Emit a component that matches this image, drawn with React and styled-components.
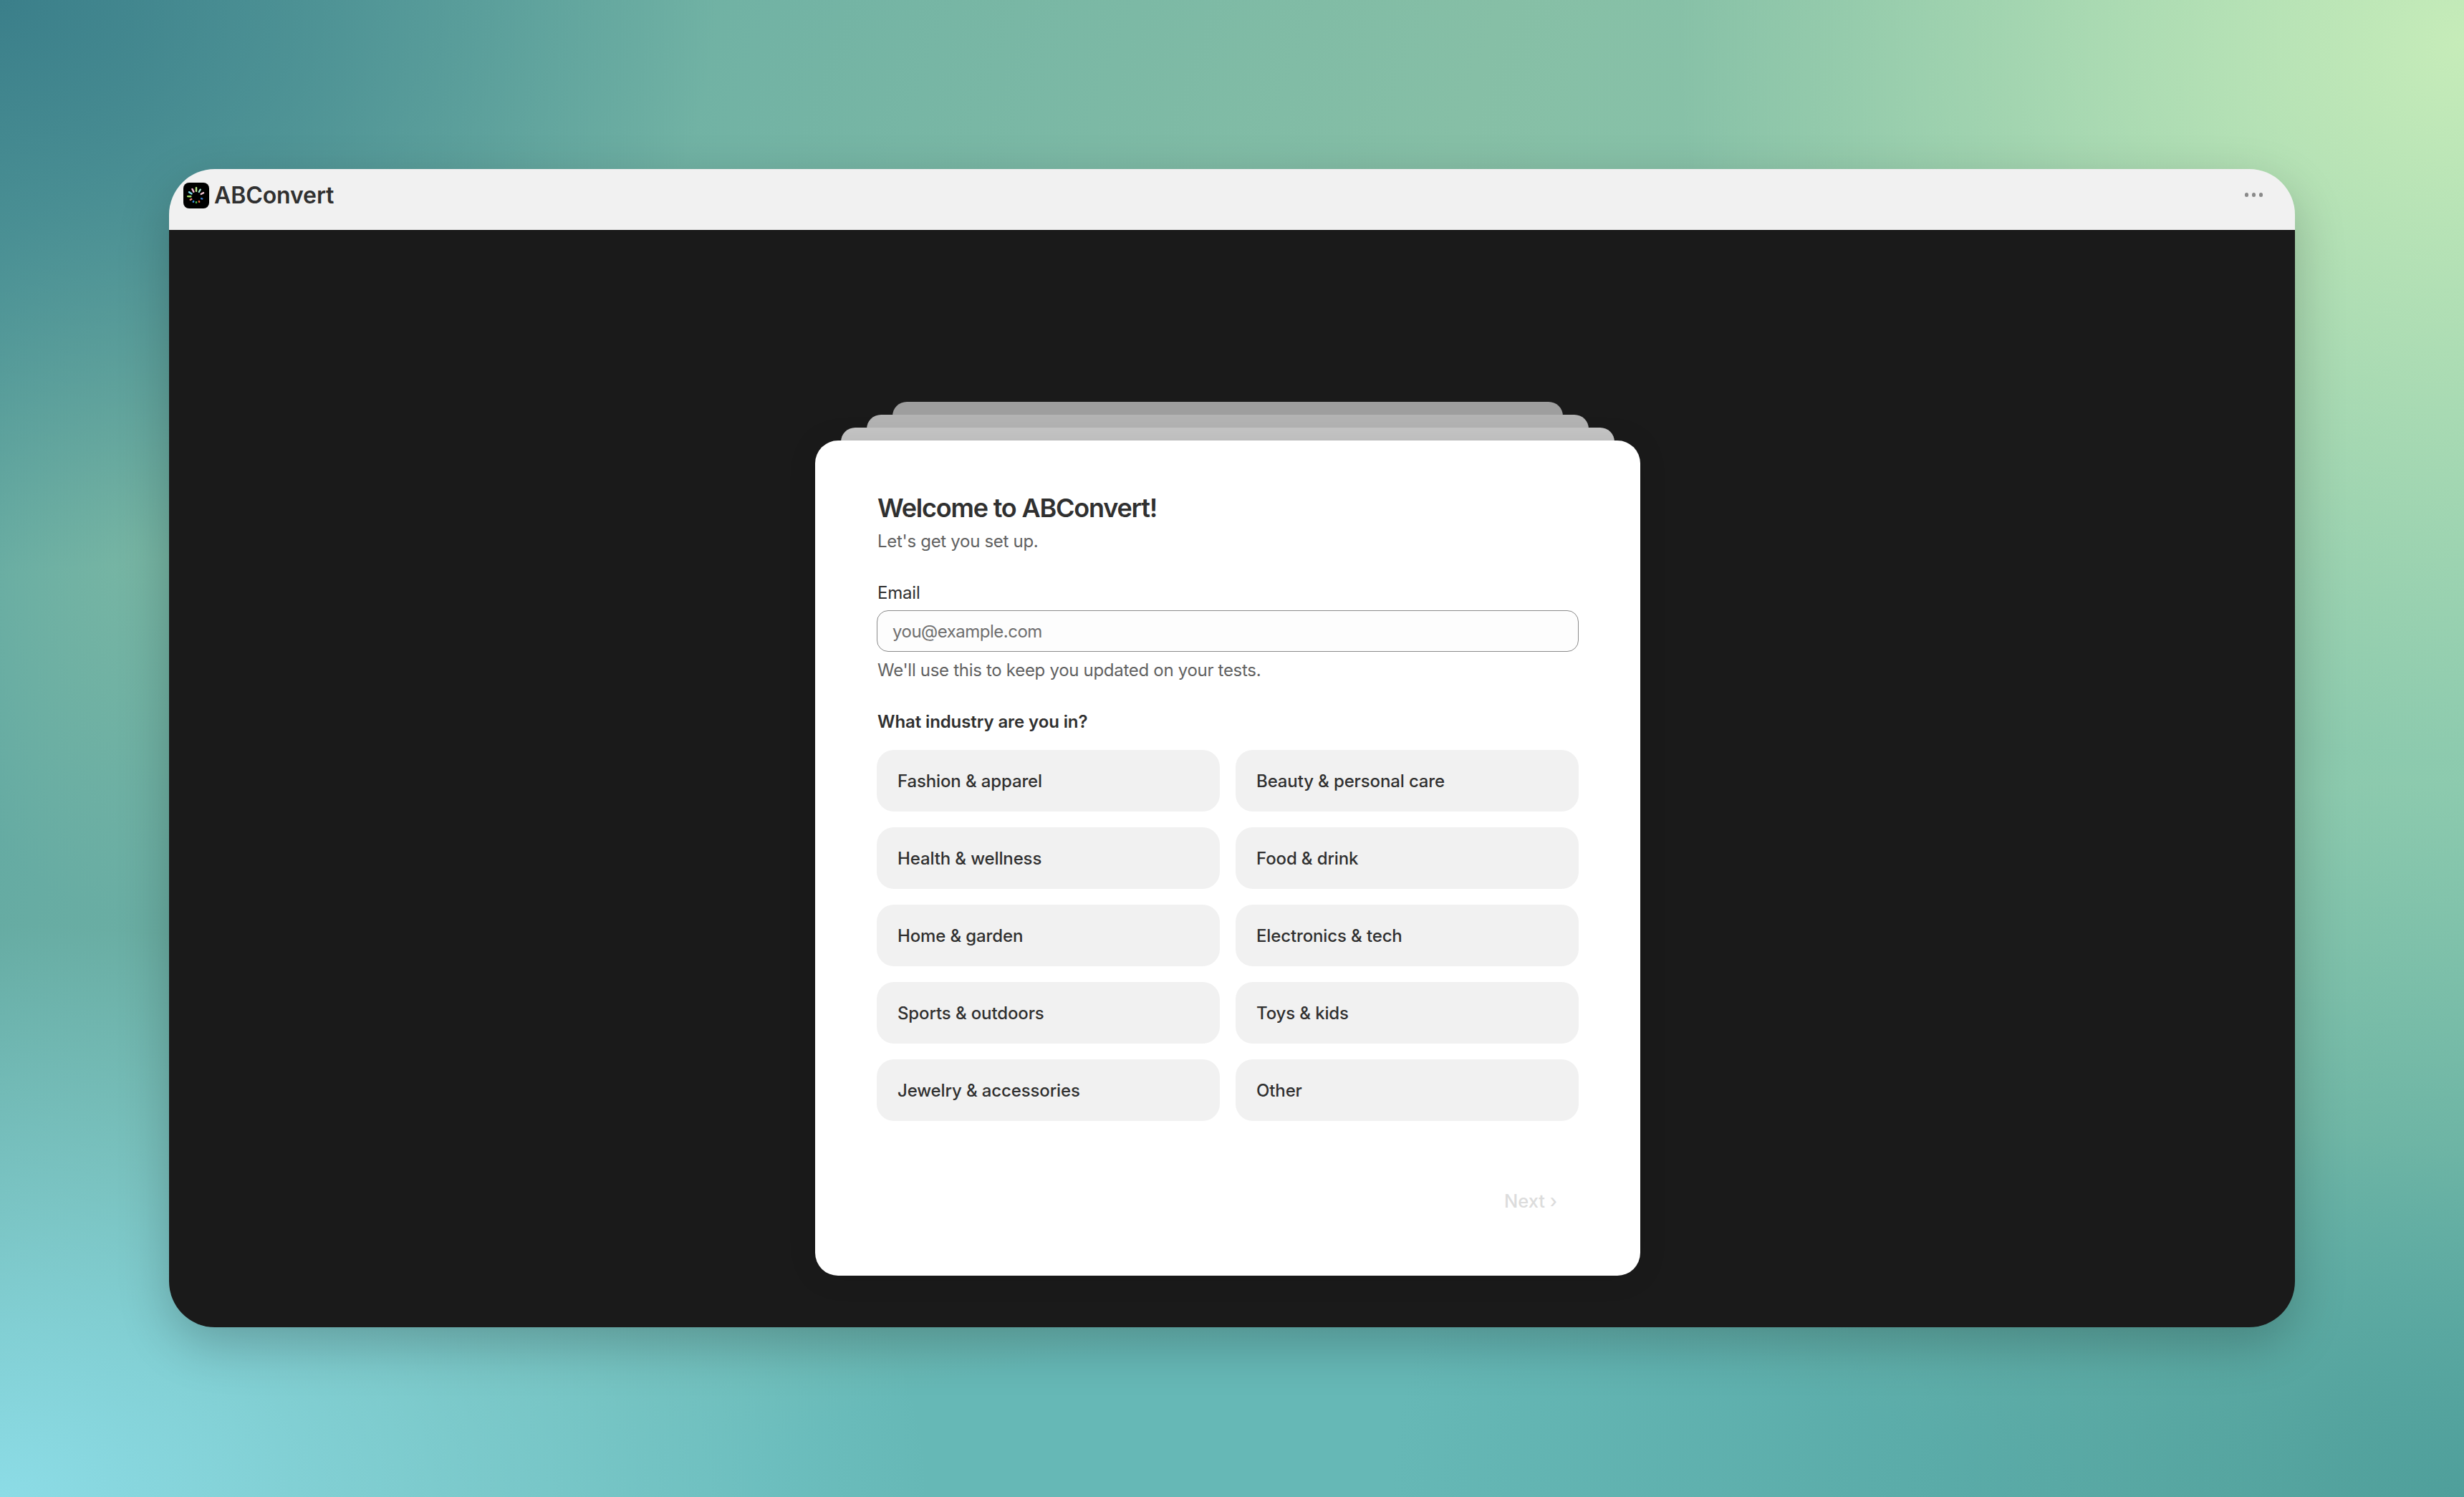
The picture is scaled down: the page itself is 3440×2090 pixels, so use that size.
import React from 'react';
import styled, { createGlobalStyle } from 'styled-components';

const Global = createGlobalStyle`
  html, body { margin: 0; padding: 0; }
  body { font-family: Inter, "Liberation Sans", sans-serif; -webkit-font-smoothing: antialiased; }
`;

const Backdrop = styled.div`
  width: 3440px;
  height: 2090px;
  box-sizing: border-box;
  padding: 236px 236px 237px;
  overflow: hidden;
  background:
    radial-gradient(1100px 1000px at 3440px 60px, #c6ecb9 0%, rgba(198,236,185,0) 100%),
    radial-gradient(1300px 800px at 0px 2090px, #8cdce6 0%, rgba(140,220,230,0) 100%),
    radial-gradient(1000px 800px at 0px 0px, #3b7f8a 0%, rgba(59,127,138,0) 100%),
    radial-gradient(1500px 1000px at 3440px 2090px, #4f9f9b 0%, rgba(79,159,155,0) 100%),
    radial-gradient(2400px 620px at 1900px 2090px, #66b8b6 0%, #66b8b6 35%, rgba(102,184,182,0) 100%),
    radial-gradient(320px 520px at 190px 760px, rgba(150,200,165,.35) 0%, rgba(150,200,165,0) 100%),
    linear-gradient(110deg, #5da6a2 0%, #86bfa6 50%, #8ecdb0 100%);
`;

const Win = styled.div`
  height: 1617px;
  display: flex;
  flex-direction: column;
  border-radius: 64px;
  overflow: hidden;
  box-shadow: 0 24px 70px rgba(0, 0, 0, 0.22);
`;

const TitleBar = styled.header`
  height: 85px;
  flex: none;
  background: #f1f1f1;
  display: flex;
  align-items: flex-start;
  justify-content: space-between;
  padding: 19px 45px 0 20px;
  box-sizing: border-box;
`;

const Brand = styled.div`
  display: flex;
  align-items: center;
  gap: 7px;
  font-size: 32px;
  line-height: 36px;
  font-weight: 600;
  letter-spacing: -0.1px;
  color: #303030;
`;

const Dots = styled.div`
  display: flex;
  gap: 4.5px;
  margin-top: 14px;
`;

const Dot = styled.span`
  width: 5.5px;
  height: 5.5px;
  border-radius: 50%;
  background: #8a8a8a;
`;

const Stage = styled.main`
  flex: 1;
  background: #1a1a1a;
  display: flex;
  justify-content: center;
  padding: 294px 12px 72px 0;
`;

const Stack = styled.div`
  position: relative;
  width: 1152px;
  height: 1166px;
`;

const Layer = styled.div`
  position: absolute;
  top: ${p => p.$top}px;
  left: ${p => p.$inset}px;
  right: ${p => p.$inset}px;
  height: 60px;
  border-radius: 20px 20px 0 0;
  background: ${p => p.$color};
`;

const Card = styled.section`
  position: relative;
  height: 100%;
  box-sizing: border-box;
  background: #fff;
  border-radius: 32px;
  padding: 72px 86px 0;
  display: flex;
  flex-direction: column;
  box-shadow: 0 2px 40px rgba(0,0,0,.1);
`;

const Title = styled.h1`
  margin: 0 0 0 1px;
  font-size: 36px;
  line-height: 44px;
  font-weight: 600;
  letter-spacing: -1.2px;
  color: #303030;
`;

const Sub = styled.p`
  margin: 9px 0 0 1px;
  font-size: 24px;
  line-height: 32px;
  letter-spacing: -0.3px;
  color: #616161;
`;

const Label = styled.label`
  margin: 40px 0 0 1px;
  font-size: 24px;
  line-height: 32px;
  letter-spacing: -0.2px;
  color: #303030;
`;

const Input = styled.input`
  margin-top: 8px;
  height: 58px;
  box-sizing: border-box;
  width: 100%;
  padding: 0 21px;
  border: 1px solid #8a8a8a;
  border-radius: 16px;
  background: #fdfdfd;
  font: 400 24px Inter, sans-serif;
  letter-spacing: -0.5px;
  color: #303030;
  outline: none;
  &::placeholder { color: #6f6f6f; opacity: 1; }
`;

const Hint = styled.p`
  margin: 10px 0 0 1px;
  font-size: 24px;
  line-height: 32px;
  letter-spacing: -0.3px;
  color: #616161;
`;

const Question = styled.h2`
  margin: 40px 0 0 1px;
  font-size: 24px;
  line-height: 32px;
  font-weight: 600;
  letter-spacing: -0.1px;
  color: #303030;
`;

const Grid = styled.div`
  margin-top: 23px;
  display: grid;
  grid-template-columns: 1fr 1fr;
  gap: 22px;
`;

const Option = styled.button`
  height: 86px;
  border: 0;
  border-radius: 24px;
  background: #f1f1f1;
  padding: 0 29px;
  text-align: left;
  font: 500 24px Inter, sans-serif;
  letter-spacing: -0.13px;
  color: #303030;
`;

const Footer = styled.div`
  display: flex;
  justify-content: flex-end;
  margin-top: 96px;
  padding-right: 30px;
`;

const Next = styled.button`
  border: 0;
  background: none;
  padding: 0;
  font: 500 25.5px/32px Inter, sans-serif;
  color: #dcdcdc;
`;

const TICKS = [
  [0, 7, '#b8e986'], [30, 6, '#9fe0d0'], [62, 6, '#f5c6d6'], [110, 3.5, '#3d7ed6'], [150, 3, '#e0683f'],
  [180, 3, '#43b649'], [210, 3, '#3f8fe0'], [242, 4, '#f08a80'], [272, 6.5, '#a8e664'], [302, 6.5, '#7fdcec'], [332, 6.5, '#f5b8d0'],
];

const Logo = () => (
  <svg width="36" height="36" viewBox="0 0 36 36" aria-hidden="true">
    <rect width="36" height="36" rx="8" fill="#000" />
    {TICKS.map(([a, len, c]) => (
      <rect key={a} x="16.8" y={19.5 - 6.5 - len} width="2.4" height={len} rx="1" fill={c} transform={`rotate(${a} 18 19.5)`} />
    ))}
  </svg>
);

const OPTIONS = [
  'Fashion & apparel', 'Beauty & personal care', 'Health & wellness', 'Food & drink', 'Home & garden',
  'Electronics & tech', 'Sports & outdoors', 'Toys & kids', 'Jewelry & accessories', 'Other',
];

export default function App() {
  return (
    <Backdrop>
      <Global />
      <Win>
        <TitleBar>
          <Brand><Logo />ABConvert</Brand>
          <Dots><Dot /><Dot /><Dot /></Dots>
        </TitleBar>
        <Stage>
          <Stack>
            <Layer $top={-54} $inset={108} $color="#9e9e9e" />
            <Layer $top={-36} $inset={72} $color="#b3b3b3" />
            <Layer $top={-18} $inset={36} $color="#c6c6c6" />
            <Card>
              <Title>Welcome to ABConvert!</Title>
              <Sub>Let's get you set up.</Sub>
              <Label>Email</Label>
              <Input placeholder="you@example.com" />
              <Hint>We'll use this to keep you updated on your tests.</Hint>
              <Question>What industry are you in?</Question>
              <Grid>{OPTIONS.map(o => <Option key={o}>{o}</Option>)}</Grid>
              <Footer><Next>Next ›</Next></Footer>
            </Card>
          </Stack>
        </Stage>
      </Win>
    </Backdrop>
  );
}
